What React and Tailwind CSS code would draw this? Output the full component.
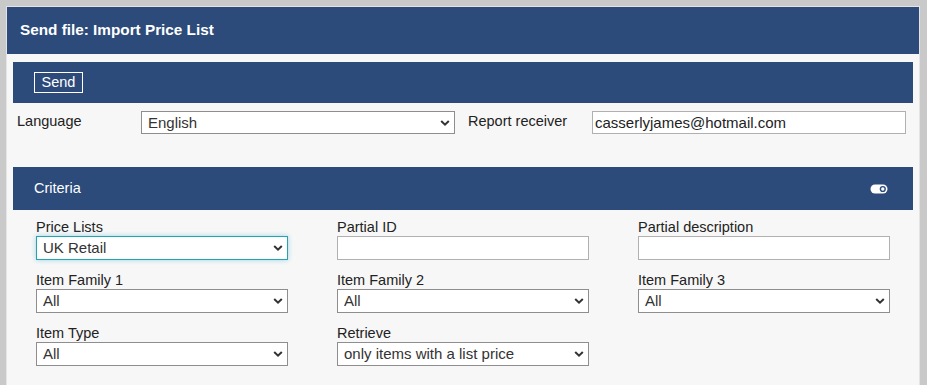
import React from 'react';

const BLUE = 'bg-[#2c4b7a]';

const Chevron = () => (
  <svg
    width="10"
    height="7"
    viewBox="0 0 10 7"
    className="absolute right-[5px] top-1/2 -translate-y-1/2 pointer-events-none"
  >
    <path d="M1.2 1.5 L5 5.2 L8.8 1.5" fill="none" stroke="#333" strokeWidth="2" />
  </svg>
);

const Select = ({ value, width = 'w-[252px]', height = 'h-[24px]', focused = false }) => (
  <div className={`relative ${width} ${height}`}>
    <select
      defaultValue={value}
      className={`appearance-none w-full h-full bg-white pl-[6px] pr-[20px] text-[15px] text-[#333] outline-none border ${
        focused ? 'border-[#26a3b0] shadow-[0_0_5px_#9ad4e8]' : 'border-[#8e8e8e]'
      }`}
    >
      <option value={value}>{value}</option>
    </select>
    <Chevron />
  </div>
);

const TextInput = ({ value = '', width = 'w-[252px]', height = 'h-[24px]' }) => (
  <input
    type="text"
    defaultValue={value}
    className={`${width} ${height} bg-white border border-[#b0b0b0] px-[2px] text-[15px] text-[#222] outline-none`}
  />
);

const Field = ({ label, children }) => (
  <div className="flex flex-col">
    <label className="text-[14.5px] leading-[17px] text-[#222]">{label}</label>
    {children}
  </div>
);

const ToggleIcon = () => (
  <svg width="18" height="10" viewBox="0 0 18 10">
    <rect x="0.5" y="0.5" width="17" height="9" rx="4.5" fill="#fff" />
    <circle cx="12.8" cy="5" r="2.4" fill="none" stroke="#2c4b7a" strokeWidth="1.4" />
  </svg>
);

export default function App() {
  return (
    <div className="w-[927px] h-[385px] overflow-hidden bg-[#c9c9c9] pt-[6px] pl-[6px] font-['Liberation_Sans',Arial,sans-serif]">
      <div className="w-[914px] h-[400px] border-l border-t border-r border-[#e4e4e4] bg-[#f7f7f7]">
        {/* title bar */}
        <div className={`h-[47px] ${BLUE} flex items-center pl-[13px]`}>
          <h1 className="text-white font-bold text-[15.3px]">Send file: Import Price List</h1>
        </div>

        <div className="px-[6px] pt-[8px]">
          {/* action bar */}
          <div className={`h-[41px] ${BLUE} flex items-center pl-[21px]`}>
            <button className="h-[21px] w-[49px] border border-white text-white text-[14.5px] leading-none flex items-center justify-center">
              Send
            </button>
          </div>

          {/* language / receiver */}
          <div className="flex items-start mt-[8px]">
            <div className="w-[128px] pl-[4px] text-[14.5px] leading-[20px] text-[#222]">Language</div>
            <Select value="English" width="w-[314px]" height="h-[23px]" />
            <div className="ml-[13px] w-[124px] text-[14.5px] leading-[20px] text-[#222]">Report receiver</div>
            <TextInput value="casserlyjames@hotmail.com" width="w-[314px]" height="h-[23px]" />
          </div>

          {/* criteria */}
          <div className={`mt-[33px] h-[43px] ${BLUE} flex items-center justify-between pl-[21px] pr-[25px]`}>
            <span className="text-white text-[14.5px]">Criteria</span>
            <ToggleIcon />
          </div>

          <div className="grid grid-cols-[252px_252px_252px] gap-x-[49px] gap-y-[12px] pl-[23px] pt-[9px]">
            <Field label="Price Lists">
              <Select value="UK Retail" focused />
            </Field>
            <Field label="Partial ID">
              <TextInput />
            </Field>
            <Field label="Partial description">
              <TextInput />
            </Field>
            <Field label="Item Family 1">
              <Select value="All" />
            </Field>
            <Field label="Item Family 2">
              <Select value="All" />
            </Field>
            <Field label="Item Family 3">
              <Select value="All" />
            </Field>
            <Field label="Item Type">
              <Select value="All" />
            </Field>
            <Field label="Retrieve">
              <Select value="only items with a list price" />
            </Field>
          </div>
        </div>
      </div>
    </div>
  );
}
